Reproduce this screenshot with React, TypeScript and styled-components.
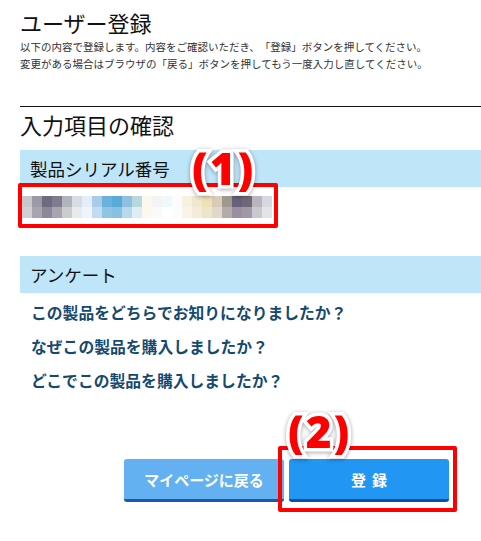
import React from "react";
import styled, { createGlobalStyle } from "styled-components";

const Global = createGlobalStyle`
  html, body { margin: 0; padding: 0; background: #fff; }
  body {
    font-family: "Noto Sans CJK JP", "Noto Sans", sans-serif;
    color: #111;
    text-spacing-trim: space-all;
  }
`;

const Page = styled.div`
  position: relative;
  width: 481px;
  height: 541px;
  overflow: hidden;
`;

const Content = styled.div`
  padding: 7px 0 0 20px;
  display: flex;
  flex-direction: column;
`;

const Title = styled.h1`
  margin: 0;
  font-size: 22px;
  font-weight: 400;
  line-height: 30px;
  color: #111;
`;

const Desc = styled.p`
  margin: 2px 0 0;
  font-size: 10.5px;
  line-height: 16.5px;
  color: #333;
  text-spacing-trim: space-all;
`;

const Rule = styled.hr`
  margin: 34px 0 0;
  border: 0;
  border-top: 1px solid #111;
  height: 0;
`;

const SectionTitle = styled.h2`
  margin: 2px 0 0;
  font-size: 22px;
  font-weight: 400;
  line-height: 30px;
  color: #111;
`;

const Band = styled.div<{ $top: number }>`
  margin-top: ${(p) => p.$top}px;
  height: 37px;
  background: #bfe5f8;
  display: flex;
  align-items: center;
  padding-left: 10px;
  font-size: 17.5px;
  color: #111;
`;

const Serial = styled.div`
  padding: 9px 0 0 2px;
  height: 69px;
  box-sizing: border-box;
`;

const Questions = styled.div`
  padding: 3px 0 0 11px;
  display: flex;
  flex-direction: column;
`;

const Question = styled.div`
  font-size: 15.8px;
  font-weight: 700;
  line-height: 34px;
  color: #15496d;
`;

const Actions = styled.div`
  margin-top: 61px;
  display: flex;
  gap: 5px;
  padding-left: 104px;
`;

const Button = styled.button<{ $primary?: boolean }>`
  width: 160px;
  height: 43px;
  border: 0;
  border-radius: 3px;
  border-bottom: 3px solid ${(p) => (p.$primary ? "#0e4fa3" : "#1c58a6")};
  background: ${(p) => (p.$primary ? "#2196f3" : "#63b1f0")};
  color: #fff;
  font-family: "Noto Sans CJK JP", sans-serif;
  font-size: 15px;
  font-weight: 700;
  letter-spacing: ${(p) => (p.$primary ? "6px" : "0")};
  padding: 0;
  padding-left: ${(p) => (p.$primary ? "6px" : "0")};
  display: flex;
  align-items: center;
  justify-content: center;
`;

const RedBox = styled.div<{ $x: number; $y: number; $w: number; $h: number }>`
  position: absolute;
  left: ${(p) => p.$x}px;
  top: ${(p) => p.$y}px;
  width: ${(p) => p.$w}px;
  height: ${(p) => p.$h}px;
  box-sizing: border-box;
  border: 4px solid #ff0000;
  border-radius: 2px;
`;

const Label = styled.div<{ $x: number; $y: number }>`
  position: absolute;
  left: ${(p) => p.$x}px;
  top: ${(p) => p.$y}px;
  font-family: "Noto Sans", "Liberation Sans", sans-serif;
  font-weight: 900;
  font-size: 44px;
  line-height: 44px;
  color: #f00;
  letter-spacing: 2px;
  -webkit-text-stroke: 7px #fff;
  paint-order: stroke fill;
  filter: drop-shadow(0 1px 2px rgba(0, 0, 0, 0.35));
`;

const mosaic: [string, string][] = [
  ["#c8c8cc", "#d0d0d4"],
  ["#9c98a8", "#a8a4b0"],
  ["#6e6a80", "#8c8898"],
  ["#807c90", "#a8a4b0"],
  ["#b0b4bc", "#cccccc"],
  ["#d8dce4", "#e8eaee"],
  ["#e4eef8", "#eef4fa"],
  ["#a8cce8", "#c0dcf0"],
  ["#6cb0dc", "#90c4e4"],
  ["#5aaad8", "#88c0e4"],
  ["#90c0e0", "#b8d8ec"],
  ["#b8d8e0", "#dceef4"],
  ["#fcf8f0", "#fcf8f0"],
  ["#f4f4f4", "#fafafa"],
  ["#f0f8fc", "#ffffff"],
  ["#fcfcfc", "#fcfcfc"],
  ["#f8f0e0", "#faf4e8"],
  ["#f0e8d0", "#f4ecd8"],
  ["#f0e0b8", "#eee4c8"],
  ["#d8ccb8", "#e0d8c8"],
  ["#a09890", "#b4aca8"],
  ["#686078", "#9890a0"],
  ["#706878", "#a098a4"],
  ["#b8b4c0", "#c8c8d0"],
  ["#d8d8e0", "#e4e4e8"],
];

function Mosaic() {
  return (
    <svg width={250} height={22} viewBox="0 0 250 22" style={{ display: "block" }}>
      {mosaic.map(([a, b], i) => (
        <g key={i}>
          <rect x={i * 10} y={0} width={10} height={11} fill={a} />
          <rect x={i * 10} y={11} width={10} height={11} fill={b} />
        </g>
      ))}
    </svg>
  );
}

export default function App() {
  return (
    <Page>
      <Global />
      <Content>
        <Title>ユーザー登録</Title>
        <Desc>
          以下の内容で登録します。内容をご確認いただき、「登録」ボタンを押してください。
          <br />
          変更がある場合はブラウザの「戻る」ボタンを押してもう一度入力し直してください。
        </Desc>
        <Rule />
        <SectionTitle>入力項目の確認</SectionTitle>
        <Band $top={11}>製品シリアル番号</Band>
        <Serial>
          <Mosaic />
        </Serial>
        <Band $top={0}>アンケート</Band>
        <Questions>
          <Question>この製品をどちらでお知りになりましたか？</Question>
          <Question>なぜこの製品を購入しましたか？</Question>
          <Question>どこでこの製品を購入しましたか？</Question>
        </Questions>
        <Actions>
          <Button>マイページに戻る</Button>
          <Button $primary>登録</Button>
        </Actions>
      </Content>
      <RedBox $x={18} $y={183} $w={260} $h={45} />
      <RedBox $x={278} $y={446} $w={179} $h={66} />
      <Label $x={192} $y={146}>(1)</Label>
      <Label $x={288} $y={409}>(2)</Label>
    </Page>
  );
}
